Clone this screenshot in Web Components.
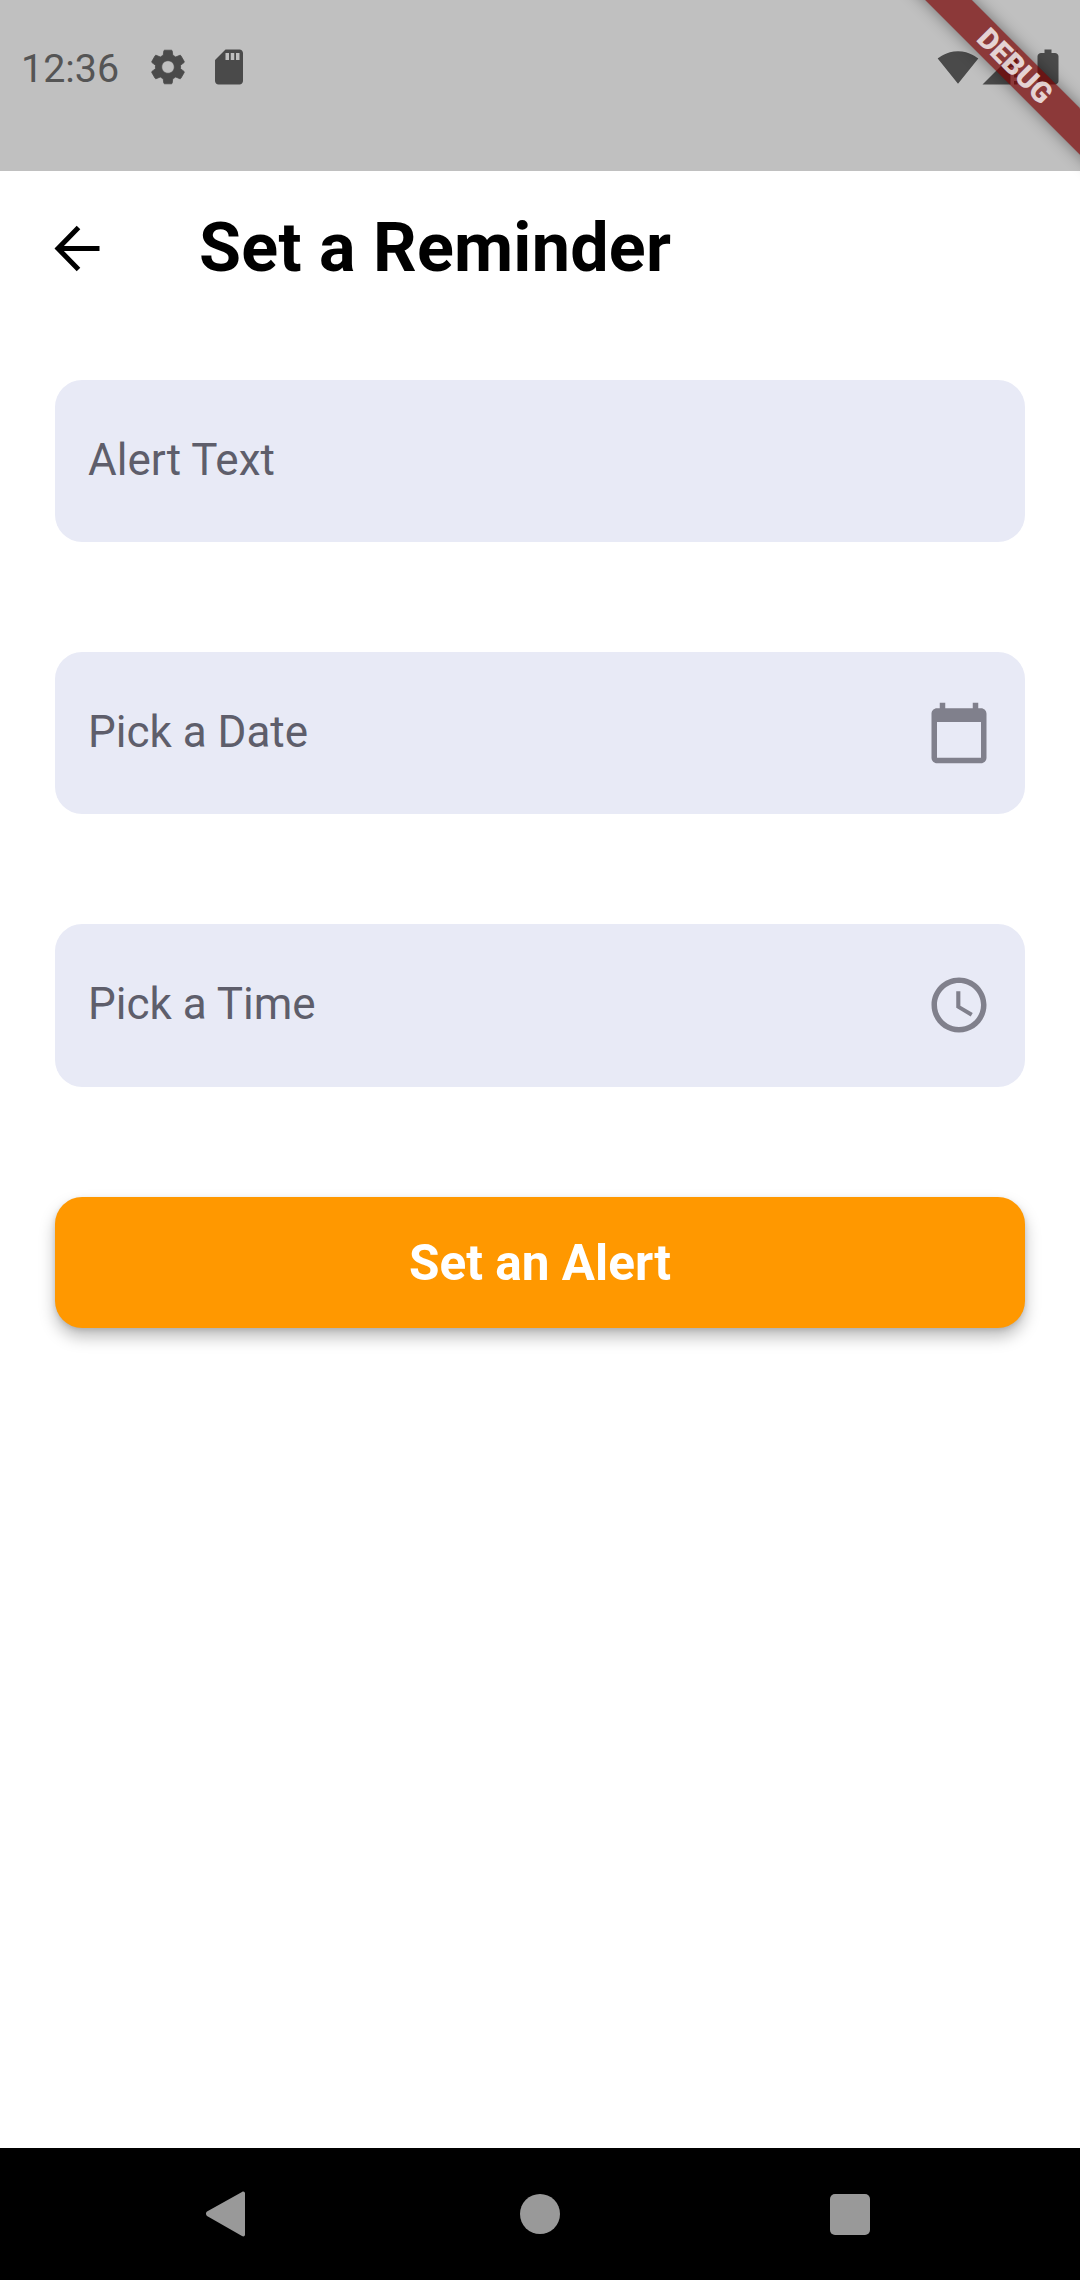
<!DOCTYPE html>
<html lang="en"><head><meta charset="utf-8"><title>Set a Reminder</title>
<style>
html,body{margin:0;padding:0;width:1080px;height:2280px;overflow:hidden;background:#fff;font-family:Roboto,"Liberation Sans",sans-serif}
reminder-screen{height:2280px}
</style></head><body>
<reminder-screen>
  <status-bar slot="status" time="12:36"></status-bar>
  <app-bar slot="top" heading="Set a Reminder"></app-bar>
  <form-field label="Alert Text"></form-field>
  <form-field label="Pick a Date" icon="calendar"></form-field>
  <form-field label="Pick a Time" icon="clock"></form-field>
  <action-button>Set an Alert</action-button>
  <nav-bar slot="nav"></nav-bar>
  <debug-banner slot="overlay"></debug-banner>
</reminder-screen>
<script>
const ICONS={
 gear:'M19.14 12.94c.04-.3.06-.61.06-.94 0-.32-.02-.64-.07-.94l2.03-1.58c.18-.14.23-.41.12-.61l-1.92-3.32c-.12-.22-.37-.29-.59-.22l-2.39.96c-.5-.38-1.03-.7-1.62-.94l-.36-2.54c-.04-.24-.24-.41-.48-.41h-3.84c-.24 0-.43.17-.47.41l-.36 2.54c-.59.24-1.13.57-1.62.94l-2.39-.96c-.22-.08-.47 0-.59.22L2.74 8.87c-.12.21-.08.47.12.61l2.03 1.58c-.05.3-.09.63-.09.94s.02.64.07.94l-2.03 1.58c-.18.14-.23.41-.12.61l1.92 3.32c.12.22.37.29.59.22l2.39-.96c.5.38 1.03.7 1.62.94l.36 2.54c.05.24.24.41.48.41h3.84c.24 0 .44-.17.47-.41l.36-2.54c.59-.24 1.13-.56 1.62-.94l2.39.96c.22.08.47 0 .59-.22l1.92-3.32c.12-.22.07-.47-.12-.61l-2.01-1.58zM12 15.6c-1.98 0-3.6-1.62-3.6-3.6s1.62-3.6 3.6-3.6 3.6 1.62 3.6 3.6-1.62 3.6-3.6 3.6z',
 sd:'M18 2h-8L4.02 8 4 20c0 1.1.9 2 2 2h12c1.1 0 2-.9 2-2V4c0-1.1-.9-2-2-2zm-6 6h-2V4h2v4zm3 0h-2V4h2v4zm3 0h-2V4h2v4z',
 wifi:'M12 21.500 23.600 7.200C23.100 6.800 18.800 3 12 3S.9 6.800.4 7.200z',
 signal:'M2 22h16V12h4V2zM20 22h2v-2h-2zM20 18h2v-6h-2z',
 battery:'M16 4h-2V2h-4v2H8c-1 0-2 .8-2 1.800v14.400C6 21.200 7 22 8 22h8c1 0 2-.8 2-1.800V5.800C18 4.800 17 4 16 4z',
 calendar:'M20 3h-1V1h-2v2H7V1H5v2H4c-1.100 0-2 .9-2 2v16c0 1.100.9 2 2 2h16c1.100 0 2-.9 2-2V5c0-1.100-.9-2-2-2zm0 18H4V8h16v13z',
 clock:'M11.990 2C6.470 2 2 6.480 2 12s4.470 10 9.990 10C17.520 22 22 17.520 22 12S17.520 2 11.990 2zM12 20c-4.420 0-8-3.580-8-8s3.580-8 8-8 8 3.580 8 8-3.580 8-8 8zm.5-13H11v6l5.250 3.150.75-1.230-4.500-2.670z'
};
const svg=(n,s,c,x='')=>`<svg width="${s}" height="${s}" viewBox="0 0 24 24" fill="${c}" aria-hidden="true"><path d="${ICONS[n]}" ${x}/></svg>`;
function def(tag,render){customElements.define(tag,class extends HTMLElement{connectedCallback(){if(this.shadowRoot)return;this.attachShadow({mode:'open'}).innerHTML=render(this)}})}

def('reminder-screen',()=>`<style>
:host{display:flex;flex-direction:column;position:relative;width:1080px;overflow:hidden;background:#fff;color:#000}
main{flex:1;display:flex;flex-direction:column;gap:110px;padding:0 55px;min-height:0}
</style><slot name="status"></slot><slot name="top"></slot><main><slot></slot></main><slot name="nav"></slot><slot name="overlay"></slot>`);

def('status-bar',h=>`<style>
:host{display:flex;align-items:center;height:171px;box-sizing:border-box;background:#c0c0c0;padding:0 11.500px 0 21px;flex:none}
.t{font:400 39.400px/42px Roboto,sans-serif;color:#555;margin-right:27.500px;position:relative;top:2px}
.l,.r{display:flex;align-items:center;height:42px;margin-top:-37px}
.l{flex:1}
svg{display:block}
.g{margin-right:19px}
</style><div class="l"><span class="t">${h.getAttribute('time')}</span><span class="g">${svg('gear',42,'#4a4a4a','stroke="#4a4a4a" stroke-width=".45"')}</span>${svg('sd',42,'#4a4a4a')}</div><div class="r">${svg('wifi',42,'#4a4a4a')}${svg('signal',42,'#4a4a4a')}<span style="margin-left:6px">${svg('battery',42,'#4a4a4a')}</span></div>`);

def('app-bar',h=>`<style>
:host{display:flex;align-items:center;height:154px;box-sizing:border-box;padding:0 0 0 45px;flex:none;margin-bottom:55px}
h1{margin:0 0 0 89px;font:700 68.250px/80px Roboto,sans-serif;letter-spacing:.25px;color:#000}
svg{display:block}
</style><svg width="65" height="65" viewBox="0 0 65 65" fill="none" stroke="#000" stroke-width="5" aria-hidden="true"><path d="M54.500 32.500H13.500M33.500 11.500 13 32.500 33.500 53.500"/></svg><h1>${h.getAttribute('heading')}</h1>`);

def('form-field',h=>{const i=h.getAttribute('icon');return `<style>
:host{display:flex;align-items:center;justify-content:space-between;height:162.200px;box-sizing:border-box;background:#e8eaf6;border-radius:27px;padding:0 33px 0 33px;flex:none}
span{font:400 44px/50px Roboto,sans-serif;color:#5e5e6b;margin-top:-2px}
svg{display:block}
</style><span>${h.getAttribute('label')}</span>${i?svg(i,66,'#80808c'):''}`});

def('action-button',()=>`<style>
:host{display:flex;align-items:center;justify-content:center;height:131.500px;background:#ff9800;border-radius:27px;flex:none;box-shadow:0 9px 16px rgba(0,0,0,.26),0 2px 5px rgba(0,0,0,.12);color:#fff;font:700 49.500px/56px Roboto,sans-serif;padding-top:2px;box-sizing:border-box}
</style><slot></slot>`);

def('nav-bar',()=>`<style>
:host{display:flex;align-items:center;height:132px;box-sizing:border-box;padding-left:206px;background:#000;flex:none}
svg{display:block}
.b{width:40px;height:41px;background:#999;border-radius:5px;margin-left:270px}
.c{width:40px;height:40px;background:#999;border-radius:50%;margin-left:274px}
</style><svg width="40" height="46" viewBox="0 0 40 46" aria-hidden="true"><path d="M36 1 1 20.500a3 3 0 0 0 0 4.500L36 45c1.500 1 3 .2 3-1.500V2.500C39 .8 37.500 0 36 1z" fill="#999"/></svg><div class="c"></div><div class="b"></div>`);

def('debug-banner',()=>`<style>
:host{position:absolute;left:864px;top:49px;width:300px;height:33px;transform:rotate(45deg);display:flex;align-items:center;justify-content:center;background:rgba(118,0,0,.7);box-shadow:0 0 16px rgba(0,0,0,.42);color:rgba(255,255,255,.78);font:900 29px/33px Roboto,sans-serif;z-index:5}
</style><span style="position:relative;left:1px">DEBUG</span>`);
</script>
</body></html>
